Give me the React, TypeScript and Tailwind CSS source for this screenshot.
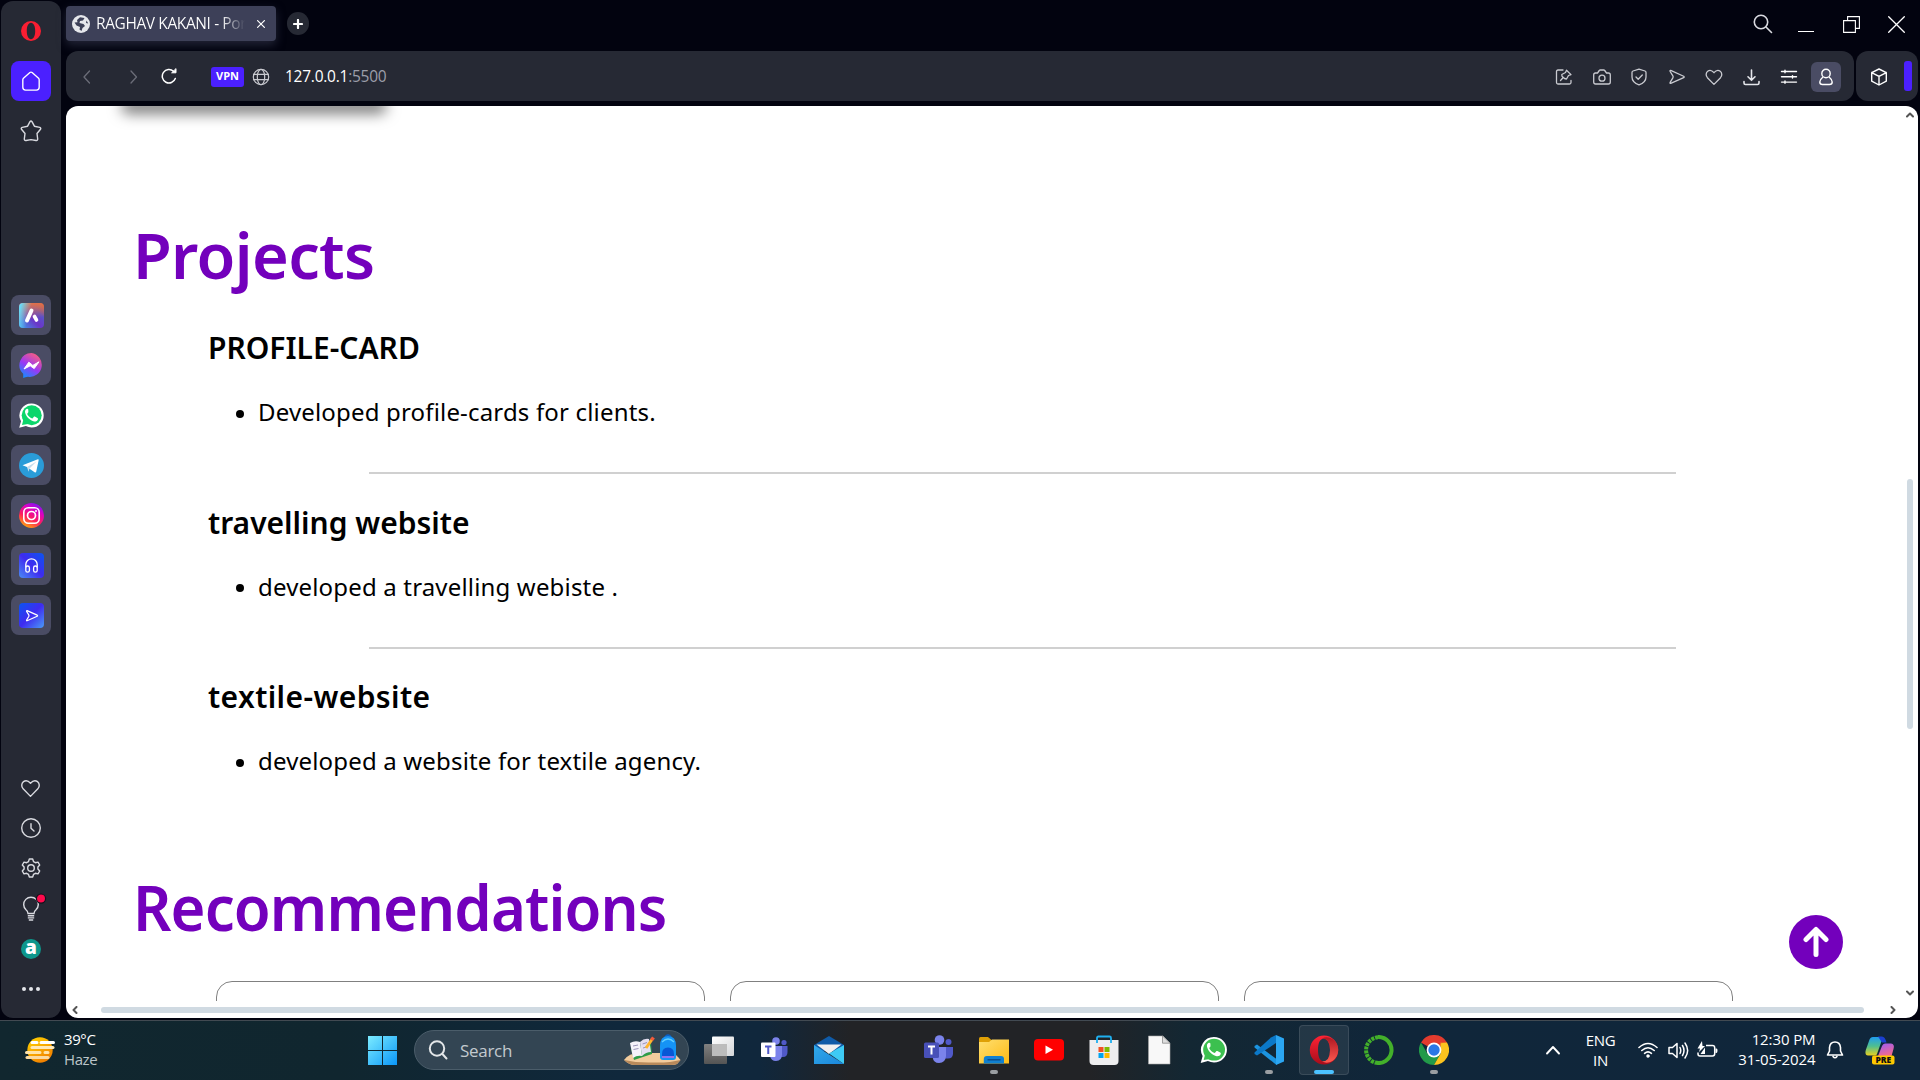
import React, { type ReactNode } from "react";

type IconProps = { size?: number; w?: number; className?: string; box?: string; children: ReactNode };

function Line({ size = 20, w = 1.5, className = "", box = "0 0 24 24", children }: IconProps) {
  return (
    <svg width={size} height={size} viewBox={box} fill="none" stroke="currentColor" strokeWidth={w}
      strokeLinecap="round" strokeLinejoin="round" className={"shrink-0 " + className}>
      {children}
    </svg>
  );
}

const heart = "M12 21 L3.6 12.4 C1.2 9.8 1.6 6 4 4.2 C6.6 2.3 9.4 3 12 6 C14.6 3 17.4 2.3 20 4.2 C22.4 6 22.8 9.8 20.4 12.4 Z";
const send = "M3.2 3 L21.2 11 Q22.6 12 21.2 13 L3.2 21 Q1.8 21.2 2.4 19.6 L6.2 13.4 Q7 12 6.2 10.6 L2.4 4.4 Q1.8 2.8 3.2 3 Z";

function OperaMark() {
  return (
    <svg width="20" height="20" viewBox="0 0 20 20" className="shrink-0">
      <path fillRule="evenodd" fill="#fa1e32" d="M10 0a10 10 0 1 0 0 20a10 10 0 1 0 0-20Z M10 1.8C12.8 1.8 14.2 5.4 14.2 10S12.8 18.2 10 18.2S5.8 14.6 5.8 10S7.2 1.8 10 1.8Z" />
    </svg>
  );
}

function AppTile({ children }: { children: ReactNode }) {
  return (
    <div className="flex h-10 w-10 items-center justify-center rounded-lg bg-[#4a4c64]">
      <svg width="25" height="25" viewBox="0 0 25 25">{children}</svg>
    </div>
  );
}

const waBubble = "M12.7 .4a12 12 0 0 1 0 24a12.3 12.3 0 0 1-5.8-1.4L.2 24.8L2 18.3A12 12 0 0 1 12.7 .4Z";
const waPhone = "M9.3 6.6c-.5-.9-1-.9-1.600-.7C6.300 6.500 5.800 8 6.100 9.600c.8 4 5 8.200 9.100 8.900c1.700.2 3.300-.7 3.700-2.100c.2-.9 0-1.200-.5-1.500l-2.600-1.300c-.5-.2-.8-.1-1.100.3l-1.100 1.300c-.3.300-.6.300-1 .1c-2-.9-3.400-2.300-4.300-4c-.2-.4-.1-.6.1-.9l.8-1c.3-.4.3-.6.1-1.100Z";

function Sidebar() {
  return (
    <aside className="mt-px ml-px flex h-[1017px] w-[60px] shrink-0 flex-col items-center rounded-xl bg-[#262934] pt-[10px] text-[#d9dae0]">
      <div className="flex h-10 w-10 items-center justify-center"><OperaMark /></div>
      <div className="mt-[10px] flex h-10 w-10 items-center justify-center rounded-lg bg-[#4b20ff] text-white">
        <Line size={20} w={1.5} box="1 0 20 22"><path d="M2 9.500 Q2 8.600 2.700 7.900 L9.800 1.700 Q11 .8 12.200 1.700 L19.300 7.900 Q20 8.600 20 9.500 V18 Q20 21 17 21 H5 Q2 21 2 18 Z" /></Line>
      </div>
      <div className="mt-[9px] flex h-10 w-10 items-center justify-center pt-px pr-px">
        <Line size={22} w={1.400} box="0 0 22 22"><path d="M10 1.700 Q11 .4 12 1.700 L14.400 6.200 L19.800 7.400 Q21.300 8 20.500 9.300 L17 13.500 L17.700 19 Q17.600 20.900 16 20.500 L11 19.600 L6 20.500 Q4.400 20.900 4.300 19 L5 13.500 L1.500 9.300 Q.7 8 2.200 7.400 L7.600 6.200 Z" /></Line>
      </div>
      <div className="mt-[145px] flex flex-col gap-[10px]">
        <AppTile>
          <defs>
            <linearGradient id="ar" x1="0" y1="1" x2="1" y2="0"><stop offset="0" stopColor="#3aa0e8" /><stop offset=".45" stopColor="#6b35c8" /><stop offset=".7" stopColor="#5a52c8" /><stop offset="1" stopColor="#c9623f" /></linearGradient>
            <linearGradient id="ar2" x1=".2" y1="0" x2=".35" y2=".7"><stop offset="0" stopColor="#f0743e" /><stop offset="1" stopColor="#f0743e" stopOpacity="0" /></linearGradient>
            <linearGradient id="ar3" x1="0" y1=".4" x2=".4" y2=".5"><stop offset="0" stopColor="#6ad8f5" /><stop offset="1" stopColor="#6ad8f5" stopOpacity="0" /></linearGradient>
          </defs>
          <rect width="25" height="25" rx="4" fill="url(#ar)" />
          <rect width="25" height="25" rx="4" fill="url(#ar2)" />
          <rect width="25" height="25" rx="4" fill="url(#ar3)" />
          <path d="M12.500 7.500 L8 17.500" stroke="#fff" strokeWidth="4" strokeLinecap="round" />
          <path d="M15.500 13.500 L17.500 17" stroke="#fff" strokeWidth="3.600" strokeLinecap="round" />
        </AppTile>
        <AppTile>
          <defs><linearGradient id="ms" x1=".25" y1="1" x2=".8" y2="0"><stop offset="0" stopColor="#158cff" /><stop offset=".45" stopColor="#9b38f5" /><stop offset="1" stopColor="#ff6178" /></linearGradient></defs>
          <path d="M12.500 0a12 12 0 1 1-3.500 23.800Q6 24 4.200 25V20.700A12 12 0 0 1 12.500 0Z" fill="url(#ms)" />
          <path d="M5 16 L9.800 9.200 L13.800 12.400 L20 8.800 L15.200 15.600 L11.200 12.800 Z" fill="#fff" stroke="#fff" strokeLinejoin="round" />
        </AppTile>
        <AppTile>
          <path d={waBubble} fill="#fff" />
          <circle cx="12.700" cy="12.300" r="10" fill="#0bd66b" /><path d="M3 22 L4.500 16 L9 21Z" fill="#0bd66b" />
          <path d={waPhone} fill="#fff" />
        </AppTile>
        <AppTile>
          <circle cx="12.500" cy="12.500" r="12.500" fill="#2a9cd8" />
          <path d="M3.500 12.200 L18.800 6.200 Q20 6 19.600 7.400 L17.200 18.800 Q16.800 20 15.600 19.200 L8 14 Z" fill="#fff" />
          <path d="M8 14 L9.500 18.800 L10.500 15.500 L17.500 8.500 Z" fill="#c5dcec" />
        </AppTile>
        <AppTile>
          <defs><linearGradient id="ig" x1=".2" y1="1" x2=".7" y2="0"><stop offset="0" stopColor="#ffb700" /><stop offset=".4" stopColor="#ff1f5b" /><stop offset=".75" stopColor="#d800c8" /><stop offset="1" stopColor="#7a18f0" /></linearGradient></defs>
          <circle cx="12.500" cy="12.500" r="12.500" fill="url(#ig)" />
          <rect x="4.800" y="4.800" width="15.400" height="15.400" rx="4.500" fill="none" stroke="#fff" strokeWidth="1.600" />
          <circle cx="12.500" cy="12.500" r="4" fill="none" stroke="#fff" strokeWidth="1.700" /><circle cx="17" cy="8" r="1" fill="#fff" />
        </AppTile>
        <AppTile>
          <defs><linearGradient id="hp" x1="0" y1="1" x2="1" y2="0"><stop offset="0" stopColor="#4a8cf5" /><stop offset=".5" stopColor="#3f2bf0" /><stop offset="1" stopColor="#0a55f0" /></linearGradient></defs>
          <rect width="25" height="25" rx="4" fill="url(#hp)" />
          <g fill="none" stroke="#fff" strokeWidth="1.300"><path d="M6.800 14.500 V11.500 A5.700 5.700 0 0 1 18.200 11.500 V14.500" /><rect x="6.800" y="13" width="3.600" height="6.200" rx="1.800" /><rect x="14.600" y="13" width="3.600" height="6.200" rx="1.800" /></g>
        </AppTile>
        <AppTile>
          <defs><linearGradient id="sd" x1="0" y1="0" x2="1" y2="1"><stop offset="0" stopColor="#0a55f0" /><stop offset=".5" stopColor="#3f2bf0" /><stop offset="1" stopColor="#4a9cf8" /></linearGradient></defs>
          <rect width="25" height="25" rx="4" fill="url(#sd)" />
          <path transform="translate(6.300 6) scale(.56)" d={send} fill="none" stroke="#fff" strokeWidth="2.200" strokeLinejoin="round" />
        </AppTile>
      </div>
      <div className="mt-[133px] flex flex-col">
        <div className="flex h-10 w-10 items-center justify-center pr-px"><Line size={21} w={1.600}><path d={heart} /></Line></div>
        <div className="flex h-10 w-10 items-center justify-center pr-px"><Line size={20} w={1.400} box="0 0 20 20"><circle cx="10" cy="10" r="9.300" /><path d="M10 5.800 V10.300 L13 13" /></Line></div>
        <div className="flex h-10 w-10 items-center justify-center pr-px"><Line size={20} w={1.400} box="0 0 20 20"><circle cx="10" cy="10" r="3.300" /><path d="M8.300 1 H11.700 L12.500 3.600 L14.400 4.700 L17 4.100 L18.700 7 L16.900 9 V11 L18.700 13 L17 15.900 L14.400 15.300 L12.500 16.400 L11.700 19 H8.300 L7.500 16.400 L5.600 15.300 L3 15.900 L1.300 13 L3.100 11 V9 L1.300 7 L3 4.100 L5.600 4.700 L7.500 3.600 Z" /></Line></div>
        <div className="flex h-[41px] w-10 items-center justify-center">
          <svg width="26" height="26" viewBox="0 0 26 26" fill="none" stroke="currentColor" strokeWidth="1.400" className="overflow-visible">
            <path d="M10 17.500 Q10 15.500 8 13.800 A7.300 7.300 0 1 1 18 13.800 Q16 15.500 16 17.500 Z M9.800 19.700 H16.200 M9.800 21.900 H16.200 M10.800 24 H15.200" />
            <circle cx="23" cy="2.600" r="4.600" fill="#ff0a4c" stroke="#11121c" strokeWidth="1.200" />
          </svg>
        </div>
        <div className="flex h-10 w-10 items-center justify-center">
          <div className="flex h-5 w-5 items-center justify-center rounded-full bg-[#0d978c] pb-[3px] font-['Open_Sans',sans-serif] text-[19px] leading-none font-extrabold text-white">a</div>
        </div>
        <div className="flex h-10 w-10 items-center justify-center gap-[3px]">
          <i className="h-1 w-1 rounded-full bg-[#e4e5ea]" /><i className="h-1 w-1 rounded-full bg-[#e4e5ea]" /><i className="h-1 w-1 rounded-full bg-[#e4e5ea]" />
        </div>
      </div>
    </aside>
  );
}

function TabStrip() {
  return (
    <div className="flex h-[51px] items-start">
      <div className="mt-[6px] flex h-[35px] w-[210px] items-center rounded bg-[#3d4058] pl-[6px] shadow-[0_4px_10px_rgba(61,64,88,0.55)]">
        <svg width="18" height="18" viewBox="0 0 18 18" className="shrink-0">
          <circle cx="9" cy="9" r="9" fill="#e6e7ec" />
          <path d="M8 2.200 L12.500 3 L11 5.500 L8 6 L7.500 8 L11.500 9 L13 11 L10.500 13 L9.500 16 L7.500 14.500 L8 12 L4.500 10.500 L2.500 7.500 L5.500 7.200 L5 5 Z M14.500 5.500 L16.300 8.500 L14 8 Z" fill="#3d4058" />
        </svg>
        <div className="ml-[6px] w-[149px] overflow-hidden bg-linear-to-r from-white from-84% to-transparent bg-clip-text pb-[2px] text-[15.500px] leading-[22px] tracking-[-0.4px] whitespace-nowrap text-transparent">RAGHAV KAKANI - Por</div>
        <Line size={8} w={1.200} box="0 0 8 8" className="ml-[12px] text-white"><path d="M.6 .6 L7.400 7.400 M7.400 .6 L.6 7.400" /></Line>
      </div>
      <div className="mt-[12px] ml-[11px] flex h-[23px] w-[22px] items-center justify-center rounded-full bg-[#262934] text-white">
        <Line size={10} w={2.200} box="0 0 10 10"><path d="M5 1 V9 M1 5 H9" /></Line>
      </div>
      <div className="mt-[14px] mr-[13px] ml-auto flex items-center text-[#d9dae0]">
        <Line size={20} w={1.600} box="0 0 20 20" className="mr-[25px]"><circle cx="8" cy="8" r="6.700" /><path d="M13 13 L18.500 18.500" /></Line>
        <svg width="16" height="20" className="mr-[29px]"><rect y="17" width="16" height="1" fill="#fff" /></svg>
        <svg width="17" height="17" fill="none" stroke="#fff" strokeWidth="1.100" className="mr-[28px]"><path d="M.6 4.600 H12.400 V16.400 H.6 Z M4.600 4.600 V.6 H16.400 V12.400 H12.400" /></svg>
        <Line size={17} w={1.300} box="0 0 17 17" className="text-white"><path d="M.7 .7 L16.300 16.300 M16.300 .7 L.7 16.300" /></Line>
      </div>
    </div>
  );
}

function ToolIcon({ children, w = 1.300, c = "text-[#c9cad0]" }: { children: ReactNode; w?: number; c?: string }) {
  return <div className={"flex w-[37.500px] justify-center " + c}><Line size={18} w={w} box="0 0 18 18">{children}</Line></div>;
}

function AddressBar() {
  return (
    <div className="flex h-[50px] gap-[2px]">
      <div className="flex w-[1788px] items-center rounded-xl bg-[#262934] pt-px pl-[14px]">
        <Line size={14} w={1.300} box="0 0 14 14" className="text-[#6b6d78]"><path d="M9.500 1 L4 7 L9.500 13" /></Line>
        <Line size={14} w={1.300} box="0 0 14 14" className="ml-[32px] text-[#6b6d78]"><path d="M5 1 L10.500 7 L5 13" /></Line>
        <Line size={17} w={1.500} box="0 0 17 17" className="ml-[21px] text-white"><path d="M14.300 10.500 A6.700 6.700 0 1 1 12.500 3.300" /><path d="M11 4.800 L15 4.800 L15 1 Z" fill="currentColor" strokeWidth="1" /></Line>
        <div className="ml-[33px] flex h-5 w-[33px] items-center justify-center rounded-[3px] bg-[#4b20ff] text-[11px] font-bold text-white">VPN</div>
        <Line size={18} w={1.200} box="0 0 18 18" className="ml-[8px] text-[#c9cad0]"><circle cx="9" cy="9" r="7.700" /><ellipse cx="9" cy="9" rx="3.700" ry="7.700" /><path d="M1.500 6.300 H16.500 M1.500 11.700 H16.500" /></Line>
        <div className="ml-[15px] pb-px text-[15.500px] leading-5 tracking-[-0.25px] text-white">127.0.0.1<span className="text-[#9c9eaa]">:5500</span></div>
        <div className="mr-[13px] ml-auto flex items-center">
          <ToolIcon><path d="M8 2 H3 Q1.500 2 1.500 3.500 V14.500 Q1.500 16 3 16 H14.500 Q16 16 16 14.500 V12.500 M11.500 2.200 L16 6.600 L13.500 7.500 L11.500 11 L9.500 10.500 L7 8.300 L6.800 6.500 L10.500 4.500 Z M8.200 9.500 L5.500 12.500" /></ToolIcon>
          <ToolIcon><path d="M2.500 5 H4.500 L6.300 2.500 Q6.600 2 7.300 2 H10.700 Q11.400 2 11.700 2.500 L13.500 5 H15.500 Q17.300 5 17.300 7 V14 Q17.300 16 15.500 16 H2.500 Q.7 16 .7 14 V7 Q.7 5 2.500 5 Z" /><circle cx="9" cy="10.200" r="3" /></ToolIcon>
          <ToolIcon><path d="M9 1.200 L15 3 Q16 3.400 16 4.500 V9 Q16 14.500 9 16.800 Q2 14.500 2 9 V4.500 Q2 3.400 3 3 Z M6 9 L8.200 11.200 L12.300 7" /></ToolIcon>
          <ToolIcon><path transform="translate(.4 .3) scale(.72)" strokeWidth="1.800" d={send} /></ToolIcon>
          <ToolIcon><path transform="translate(-.4 0) scale(.78)" strokeWidth="1.700" d={heart} /></ToolIcon>
          <ToolIcon w={1.600} c="text-[#e4e5ea]"><path d="M8.500 2 V12 M5 8.800 L8.500 12.300 L12 8.800 M1 13.500 V15 Q1 16.500 2.500 16.500 H14.500 Q16 16.500 16 15 V13.500" /></ToolIcon>
          <ToolIcon w={1.400} c="text-white"><path d="M1.500 3.500 H16.500 M1.500 8.800 H16.500 M1.500 14.100 H16.500 M5 2.300 V4.700 M12.500 7.600 V10 M5 12.900 V15.300" /></ToolIcon>
          <div className="ml-[3px] flex h-[30px] w-[30px] items-center justify-center rounded-md bg-[#4a4c64] text-white">
            <Line size={18} w={1.400} box="0 0 18 18"><circle cx="9" cy="5.500" r="4.200" /><path d="M5.500 9.500 Q2.800 11.500 2.800 14 Q2.800 16.500 5.500 16.500 H12.500 Q15.200 16.500 15.200 14 Q15.200 11.500 12.500 9.500" /></Line>
          </div>
        </div>
      </div>
      <div className="flex w-[62px] items-center rounded-xl bg-[#262934] pl-[14px]">
        <Line size={18} w={1.400} box="0 0 18 18" className="mt-px text-white"><path d="M9 1 L16.300 4.600 V13.200 L9 17 L1.700 13.200 V4.600 Z M1.700 4.600 L9 8.300 L16.300 4.600 M9 8.300 V17" /></Line>
        <div className="ml-[16px] h-[30px] w-2 rounded-[3px] bg-[#4b20ff]" />
      </div>
    </div>
  );
}

function Project({ title, text, tracking }: { title: string; text: string; tracking: string }) {
  return (
    <article className="h-[174.500px] pl-[142px]">
      <h2 className={"text-[30px] leading-[40px] font-semibold whitespace-nowrap " + tracking}>{title}</h2>
      <div className="mt-[25px] flex items-center pl-[28px]">
        <i className="mt-[3px] mr-[14px] h-2 w-2 rounded-full bg-black" />
        <p className="text-[24px] leading-[38px] tracking-[0.17px] whitespace-nowrap">{text}</p>
      </div>
    </article>
  );
}

const Rule = () => <div className="-mt-[30.500px] mb-[28.500px] ml-[303px] h-[2px] w-[1307px] bg-[#d0d0d0]" />;

function Page() {
  return (
    <main className="relative mt-[5px] flex h-[912px] w-[1852px] flex-col overflow-hidden rounded-xl bg-white font-['Trebuchet_MS','Noto_Sans',sans-serif] text-black">
      <div className="-mt-[10px] ml-[58px] h-[10px] w-[260px] shrink-0 rounded-lg bg-black shadow-[0_5px_14px_3px_rgba(0,0,0,0.5)]" />
      <h1 className="mt-[104px] ml-[67px] text-[63px] leading-[90px] font-semibold tracking-[-0.65px] text-[#7300bc]">Projects</h1>
      <section className="mt-[28px]">
        <Project title="PROFILE-CARD" text="Developed profile-cards for clients." tracking="tracking-normal" />
        <Rule />
        <Project title="travelling website" text="developed a travelling webiste ." tracking="tracking-normal" />
        <Rule />
        <Project title="textile-website" text="developed a website for textile agency." tracking="tracking-[0.4px]" />
      </section>
      <h1 className="mt-[10.500px] ml-[67px] origin-left scale-x-95 text-[63px] leading-[90px] font-semibold tracking-[-0.95px] text-[#7300bc]">Recommendations</h1>
      <div className="mt-[29px] ml-[150px] flex h-[20px] shrink-0 gap-[25.200px] overflow-hidden">
        {[0, 1, 2].map((i) => <div key={i} className="h-[60px] w-[489px] shrink-0 rounded-2xl border border-[#808080]" />)}
      </div>

      <div className="absolute top-[809px] left-[1723px] flex h-[54px] w-[54px] items-center justify-center rounded-full bg-[#7300bc] text-white">
        <Line size={32} w={5} box="0 0 32 32"><path d="M16 28.500 V4 M6 13.500 L16 3.500 L26 13.500" /></Line>
      </div>
      <div className="absolute top-[373px] left-[1841px] h-[250px] w-[6px] rounded-full bg-[#d0dae2]" />
      <div className="absolute top-[901px] left-[35px] h-[6px] w-[1763px] rounded-full bg-[#d0dae2]" />
      <Line size={8} w={2} box="0 0 8 8" className="absolute top-[5px] left-[1840px] text-[#555]"><path d="M1 5.500 L4 2.500 L7 5.500" /></Line>
      <Line size={8} w={2} box="0 0 8 8" className="absolute top-[883px] left-[1840px] text-[#555]"><path d="M1 2.500 L4 5.500 L7 2.500" /></Line>
      <Line size={8} w={2} box="0 0 8 8" className="absolute top-[900px] left-[5px] text-[#555]"><path d="M5.500 1 L2.500 4 L5.500 7" /></Line>
      <Line size={8} w={2} box="0 0 8 8" className="absolute top-[900px] left-[1823px] text-[#555]"><path d="M2.500 1 L5.500 4 L2.500 7" /></Line>
    </main>
  );
}

function Slot({ children, state = "none" }: { children?: ReactNode; state?: "none" | "open" | "active" }) {
  return (
    <div className="relative flex h-full w-[55px] shrink-0 items-center justify-center">
      {state === "active" && <div className="absolute top-[5px] left-[2px] h-[50px] w-[50px] rounded border border-white/10 bg-white/8" />}
      <svg width="30" height="30" viewBox="0 0 30 30" className="relative">{children}</svg>
      {state === "open" && <div className="absolute top-[50px] left-[23.500px] h-1 w-2 rounded-full bg-[#9a9ea2]" />}
      {state === "active" && <div className="absolute top-[50px] left-[17.500px] h-1 w-5 rounded-full bg-[#4cc2ff]" />}
    </div>
  );
}

function Taskbar() {
  return (
    <footer className="mt-[2px] flex h-[60px] w-full items-center bg-[linear-gradient(90deg,#11272f_0,#10262f_340px,#10283c_620px,#10273c_760px,#222326_850px,#222326_1090px,#132733_1190px,#10263a_1400px,#10263b_100%)] shadow-[inset_0_1px_0_#424a52]">
      <svg width="30" height="26" viewBox="0 0 30 26" className="ml-[25px]">
        <defs><linearGradient id="sun" x1=".2" y1="0" x2=".8" y2="1"><stop offset="0" stopColor="#ffd000" /><stop offset="1" stopColor="#f07800" /></linearGradient></defs>
        <circle cx="15" cy="13" r="12.700" fill="url(#sun)" />
        <g strokeLinecap="round" strokeWidth="3"><path d="M7 5.500 H12 M16 5.500 H28.500" stroke="#fff" /><path d="M7 10.500 H28" stroke="#ffe9b8" /><path d="M1.500 15.500 H15 M20 15.500 H23" stroke="#ffe3a8" /><path d="M2 20.500 H23" stroke="#fbd9a0" /></g>
      </svg>
      <div className="ml-[9px] w-[80px] pb-[2px] text-[15px] leading-5 tracking-[-0.4px] whitespace-nowrap text-white"><div>39°C</div><div className="text-[#bcc5c9]">Haze</div></div>
      <div className="ml-[211px] flex w-[59px] pl-[13px]">
        <svg width="29" height="29" viewBox="0 0 29 29">
          <defs><linearGradient id="win" x1="0" y1="0" x2="1" y2="1"><stop offset="0" stopColor="#7cecff" /><stop offset="1" stopColor="#0a96f8" /></linearGradient></defs>
          <path d="M0 0H14V14H0ZM15 0H29V14H15ZM0 15H14V29H0ZM15 15H29V29H15Z" fill="url(#win)" />
        </svg>
      </div>
      <div className="flex h-10 w-[275px] items-center rounded-full border border-[#4b5d6a] bg-[#334553] pl-[13px] text-[#e3e6e8]">
        <Line size={20} w={2} box="0 0 20 20"><circle cx="9" cy="8.500" r="7.200" /><path d="M14.200 13.800 L18.500 18.500" /></Line>
        <div className="ml-[12px] pt-px text-[17px] leading-6 tracking-[-0.3px] text-[#c3cacf]">Search</div>
        <svg width="58" height="32" viewBox="0 0 58 32" className="mr-[7px] ml-auto">
          <path d="M1 26 Q6 19 16 19 H46 Q54 20 57.500 26 L54 30 Q52 31 48 31 H12 Q6 31 1 26Z" fill="#f3cc9d" /><path d="M1 26 Q14 29 30 28.500 Q46 29 57.500 26 L54 30 Q52 31 48 31 H12 Q6 31 1 26Z" fill="#b98a5b" />
          <path d="M8 15 L28 9 L29 20 L11 26 Z" fill="#2f9c48" /><path d="M7 9 Q12 6 17 8 L19 22 Q14 21 10 24 Z" fill="#f5f2fa" /><path d="M17 8 Q21 4 26 5 L28 18 Q23 18 19 22 Z" fill="#e4dff0" /><path d="M10 12 L15 11 M10.500 15.500 L15.500 14.500 M19.500 10 L24 8.500 M20 14 L25 12.500" stroke="#9a93b8" strokeWidth="1" />
          <path d="M23 14 L29 5.500" stroke="#ffb42e" strokeWidth="3" /><path d="M28.500 6 L30.500 3.500" stroke="#f45b3b" strokeWidth="3.500" />
          <path d="M42 3 Q45 -1 48 3" stroke="#0b61c9" strokeWidth="1.500" fill="none" /><path d="M37 12 Q37 2 45 2 Q53 2 53 12 V23 Q53 26 50 26 H40 Q37 26 37 23Z" fill="#1593f5" /><path d="M39 8 Q45 2 51 8" stroke="#63d0ff" fill="none" strokeWidth="1.300" /><path d="M39 20 Q39 13.500 45 13.500 Q51 13.500 51 20 V22 H39Z" fill="#0757d6" /><path d="M39 23 H51" stroke="#b06af0" strokeWidth="1.600" />
        </svg>
      </div>
      <div className="w-[2.500px]" />
      <Slot>
        <defs><linearGradient id="tv1" x1="0" y1="0" x2="0" y2="1"><stop offset="0" stopColor="#808080" /><stop offset="1" stopColor="#545454" /></linearGradient><linearGradient id="tv2" x1="0" y1="0" x2="1" y2="1"><stop offset="0" stopColor="#fff" /><stop offset="1" stopColor="#d4d6d8" /></linearGradient></defs>
        <rect x="0" y="9" width="23" height="20" rx="1" fill="url(#tv1)" /><rect x="8" y="1.500" width="22" height="19.500" rx="1" fill="url(#tv2)" /><rect x="8" y="9" width="15" height="12" fill="#bcbcbc" />
      </Slot>
      <Slot>
        <circle cx="17" cy="6" r="3.800" fill="#7b83eb" /><circle cx="25" cy="7.500" r="2.600" fill="#5059c9" /><path d="M20 11 H28.500 V17 Q28.500 22 24 22 H20Z" fill="#5059c9" /><path d="M10 11 H23 V19.500 Q23 26 17 26 Q12 26 11 21Z" fill="#7b83eb" /><rect x="2" y="7.500" width="14.500" height="14.500" rx="1" fill="#fff" /><path d="M6 11.500 H12.500 M9.250 11.500 V19" stroke="#5059c9" strokeWidth="2" />
      </Slot>
      <Slot>
        <defs><linearGradient id="ml" x1="0" y1="0" x2="1" y2="1"><stop offset="0" stopColor="#32aaea" /><stop offset="1" stopColor="#1a86dc" /></linearGradient></defs>
        <path d="M0 10 L15 1 L30 10 V16 H0Z" fill="#0f5ba8" /><path d="M2.500 9.500 H27.500 L15 19Z" fill="#f0f0f0" /><path d="M0 10 L30 29 H0Z" fill="url(#ml)" /><path d="M15 18.500 L30 10 V29Z" fill="#3ecbf5" />
      </Slot>
      <Slot />
      <Slot>
        <circle cx="15.500" cy="5" r="4.800" fill="#7b83eb" /><circle cx="24.500" cy="7" r="3" fill="#5059c9" /><path d="M20 12 H29 V19 Q28.500 23.500 24 23.500 H20Z" fill="#5059c9" /><path d="M9 12 H22 V21 Q21.500 28 15 28 Q9.500 28 8.500 22Z" fill="#7b83eb" /><rect x="0" y="7.500" width="15" height="15.500" rx="1.500" fill="#4850b8" /><path d="M4 11.500 H11 M7.500 11.500 V19.500" stroke="#fff" strokeWidth="2" />
      </Slot>
      <Slot state="open">
        <defs><linearGradient id="fd" x1="0" y1="0" x2="1" y2="1"><stop offset="0" stopColor="#ffdf70" /><stop offset="1" stopColor="#fdbb16" /></linearGradient></defs>
        <path d="M0 3.500 Q0 2 1.500 2 H9 L12.500 5 V9 H0Z" fill="#dfa006" /><path d="M0 7 H10 L13 4.500 H30 V28.500 H0Z" fill="url(#fd)" /><path d="M4.800 28.500 V24 Q4.800 21 7.800 21 H22 Q25 21 25 24 V28.500Z" fill="#1080d0" /><path d="M8.500 24.800 H21.500" stroke="#0a4a8a" strokeWidth="1.400" />
      </Slot>
      <Slot><rect x="0" y="4" width="30" height="21.500" rx="4" fill="#f00" /><path d="M11.500 10.500 L19 14.800 L11.500 19Z" fill="#fff" /></Slot>
      <Slot>
        <path d="M8 7 V3 Q8 1.500 9.500 1.500 H20.500 Q22 1.500 22 3 V7" fill="none" stroke="#1fb0f0" strokeWidth="1.800" /><path d="M.5 5 H29.500 V26 Q29.500 30 25.500 30 H4.500 Q.5 30 .5 26Z" fill="#eeeeef" />
        <path d="M8 5 V8 M22 5 V8" stroke="#1fb0f0" strokeWidth="1.800" />
        <rect x="9.500" y="12" width="5" height="5" fill="#f25022" /><rect x="15.500" y="12" width="5" height="5" fill="#7fba00" /><rect x="9.500" y="18" width="5" height="5" fill="#00a4ef" /><rect x="15.500" y="18" width="5" height="5" fill="#ffb900" />
      </Slot>
      <Slot><path d="M4.500 1 H19 L26 8 V29 H4.500Z" fill="#f8f8f8" stroke="#a8a8a8" strokeWidth=".6" /><path d="M18.500 1 V8.200 H26Z" fill="#dedede" stroke="#8c8c8c" strokeWidth=".8" /></Slot>
      <Slot>
        <g transform="translate(1.500 1.500) scale(1.070)"><path d={waBubble} fill="#fff" /><circle cx="12.700" cy="12.300" r="10.200" fill="#3cc04f" /><path d="M3 22 L4.500 16 L9 21Z" fill="#3cc04f" /><path d={waPhone} fill="#fff" /></g>
      </Slot>
      <Slot state="open">
        <path d="M.5 11 L3 9.500 L22.500 24 V30 L.5 12.500Z" fill="#1c94e0" /><path d="M.5 17.500 L17 2.500 L22 0 V8 L3 20.500 L.5 19Z" fill="#0b78c8" /><path d="M22 0 L30 3.500 V26.500 L22 30Z" fill="#2ba6f2" />
      </Slot>
      <Slot state="active">
        <defs><linearGradient id="op" x1="0" y1="0" x2="0" y2="1"><stop offset="0" stopColor="#ff2335" /><stop offset="1" stopColor="#a80d1a" /></linearGradient><linearGradient id="op2" x1="0" y1="0" x2="0" y2="1"><stop offset="0" stopColor="#b01822" /><stop offset="1" stopColor="#ff5a50" /></linearGradient></defs>
        <path fillRule="evenodd" d="M15 .5a14.200 14.500 0 1 0 0 29a14.200 14.500 0 1 0 0-29Z M15 3.500C19.200 3.500 21 8.500 21 15S19.200 26.500 15 26.500S9 21.500 9 15S10.800 3.500 15 3.500Z" fill="url(#op)" />
        <path d="M13 3.500 Q18 1 23.500 4 Q29.200 8 29.200 15 T23.500 26 Q18 29 13 26.500 Q21 26.500 21 15 T13 3.500Z" fill="url(#op2)" />
      </Slot>
      <Slot><path d="M14 2 A13 13 0 1 1 11 27.500" fill="none" stroke="#43b02a" strokeWidth="4" /><path d="M14 2.200 A13 13 0 0 0 11 27.500" fill="none" stroke="#43b02a" strokeWidth="4" strokeDasharray="3 .9" /></Slot>
      <Slot state="open">
        <path d="M15 15 L2 7.500 A15 15 0 0 1 28 7.500Z" fill="#e33b2e" /><path d="M2 7.500 A15 15 0 0 0 15 30 L21.500 18.700 L8.500 18.700Z" fill="#229a49" /><path d="M28 7.500 A15 15 0 0 1 15 30 L21.500 18.700 L21.500 7.500Z" fill="#fcc31e" /><path d="M15 7.500 H28 L15 9Z" fill="#e33b2e" /><circle cx="15" cy="15" r="7.400" fill="#fff" /><circle cx="15" cy="15" r="5.700" fill="#2b77e6" />
      </Slot>
      <div className="ml-[84px] flex items-center text-white">
        <Line size={14} w={1.900} box="0 0 14 14"><path d="M1 10.500 L7 4 L13 10.500" /></Line>
        <div className="ml-[16px] w-[50px] text-center text-[15px] leading-5 tracking-[-0.3px]"><div>ENG</div><div>IN</div></div>
        <Line size={20} w={1.600} box="0 0 20 20" className="ml-[12px]"><path d="M1 7.500 Q10 -.5 19 7.500 M3.800 10.500 Q10 5 16.200 10.500 M6.600 13.300 Q10 10.500 13.400 13.300" /><circle cx="10" cy="16" r="1.500" fill="currentColor" strokeWidth=".4" /></Line>
        <Line size={21} w={1.500} box="0 0 21 21" className="ml-[10px]"><path d="M1 7.500 H4.500 L9 3.500 V17.500 L4.500 13.500 H1Z M12 7.500 Q13.500 10.500 12 13.500 M14.500 5.500 Q17.500 10.500 14.500 15.500 M17 3 Q22.300 10.500 17 18" /></Line>
        <svg width="21" height="18" viewBox="0 0 21 18" className="ml-[8px]"><path d="M9 4.500 H15.500 Q17.700 4.500 17.700 6.700 V12.800 Q17.700 15 15.500 15 H3 Q1 15 1 13 V11.500" fill="none" stroke="#fff" strokeWidth="1.500" /><path d="M18.500 7.500 H19.500 Q20.500 7.500 20.500 9.500 T19.500 12 H18.500Z M5 0 L.5 7.500 H3 L2 11 L8 5 H5.500Z M3.500 13 L8 6.500 V13Z" fill="#fff" /></svg>
        <div className="ml-[8px] w-[90px] pb-[2px] text-right text-[15px] leading-5 tracking-[-0.1px] whitespace-nowrap"><div>12:30 PM</div><div>31-05-2024</div></div>
        <Line size={18} w={1.600} box="0 0 18 18" className="ml-[10px]"><path d="M9 1 Q14 1 14.500 6.500 V10 L16.500 14 H1.500 L3.500 10 V6.500 Q4 1 9 1 M7 15.500 Q9 18 11 15.500" /></Line>
        <svg width="30" height="30" viewBox="0 0 30 30" className="ml-[21px]">
          <defs><linearGradient id="cpl" x1="0" y1="0" x2="0" y2="1"><stop offset="0" stopColor="#1f9df0" /><stop offset=".5" stopColor="#4fbf8f" /><stop offset="1" stopColor="#e8d020" /></linearGradient><linearGradient id="cpr" x1=".2" y1="0" x2=".6" y2="1"><stop offset="0" stopColor="#a05cf0" /><stop offset="1" stopColor="#f56a8a" /></linearGradient></defs>
          <path d="M8 2 H18 L12 19 Q11.500 20.500 10 20.500 H3 Q-.5 20 .8 15 L4 6 Q5 2 8 2Z" fill="url(#cpl)" /><path d="M13 1.500 H17 Q20 1.500 21.500 7.500 H17Z" fill="#1a3fd0" /><path d="M20 8.500 H26 Q30 9 28.500 14 L26.500 21 H13 L17 11 Q18 8.500 20 8.500Z" fill="url(#cpr)" /><rect x="7" y="20.500" width="22.500" height="9" rx="2" fill="#ffc800" />
          <text x="18.300" y="28.300" textAnchor="middle" fontSize="8.500" fontWeight="800" fontFamily="Open Sans, sans-serif" fill="#111">PRE</text>
        </svg>
      </div>
    </footer>
  );
}

export default function App() {
  return (
    <div className="flex h-[1080px] w-[1920px] flex-col overflow-hidden bg-[#02030f] font-['Segoe_UI','Open_Sans','Noto_Sans',sans-serif]">
      <div className="flex h-[1018px] shrink-0">
        <Sidebar />
        <div className="ml-[5px] flex w-[1852px] flex-col">
          <TabStrip />
          <AddressBar />
          <Page />
        </div>
      </div>
      <Taskbar />
    </div>
  );
}
